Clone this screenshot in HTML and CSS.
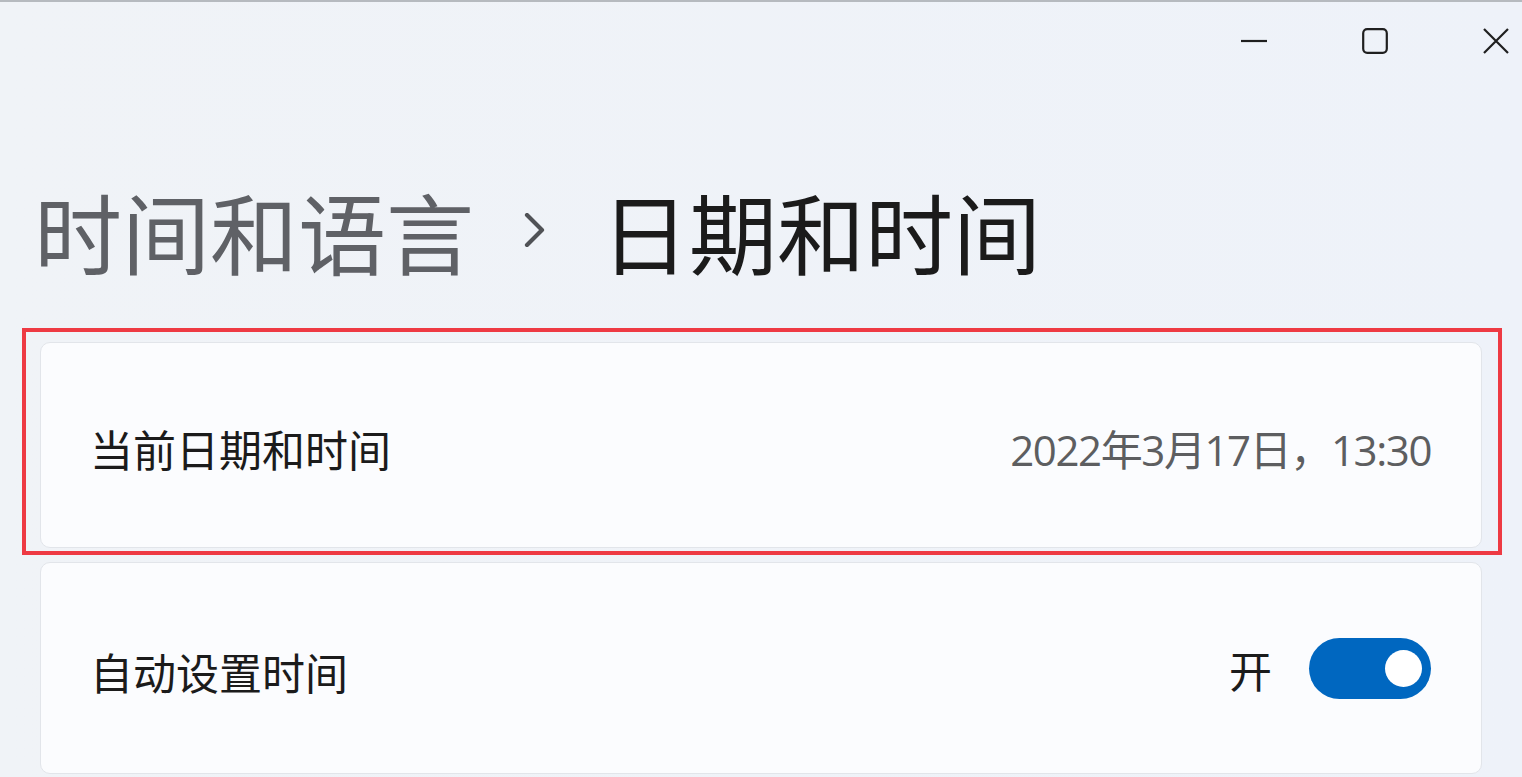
FILE: index.html
```html
<!DOCTYPE html>
<html lang="zh-CN">
<head>
  <meta charset="UTF-8" />
  <meta name="viewport" content="width=device-width, initial-scale=1.0"/>
  <title>日期和时间</title>
  <link rel="stylesheet" href="styles.css">
</head>
<body>
  <div class="window">
    <!-- Title bar controls -->
    <div class="titlebar">
      <button class="caption-btn" aria-label="最小化">
        <svg width="26" height="26" viewBox="0 0 26 26"><path d="M0 13H26" stroke="#1f1f1f" stroke-width="2.2" fill="none"/></svg>
      </button>
      <button class="caption-btn" aria-label="最大化">
        <svg width="26" height="26" viewBox="0 0 26 26"><rect x="1.2" y="1.2" width="23.6" height="23.6" rx="4" stroke="#1f1f1f" stroke-width="2.2" fill="none"/></svg>
      </button>
      <button class="caption-btn" aria-label="关闭">
        <svg width="26" height="26" viewBox="0 0 26 26"><path d="M1 1L25 25M25 1L1 25" stroke="#1f1f1f" stroke-width="2.2" fill="none"/></svg>
      </button>
    </div>

    <!-- Breadcrumb heading -->
    <h1 class="breadcrumb">
      <span class="crumb-parent">时间和语言</span>
      <svg class="crumb-sep" width="24" height="34" viewBox="0 0 24 34"><path d="M4 2L19 17L4 32" stroke="#505256" stroke-width="4.2" fill="none" stroke-linecap="round" stroke-linejoin="round"/></svg>
      <span class="crumb-current">日期和时间</span>
    </h1>

    <!-- Settings cards -->
    <div class="cards">
      <div class="card card-current">
        <span class="card-label">当前日期和时间</span>
        <span class="card-value">2022年3月17日，13:30</span>
        <div class="mark"></div>
      </div>

      <div class="card card-auto">
        <span class="card-label">自动设置时间</span>
        <div class="toggle-group">
          <span class="toggle-text">开</span>
          <div class="toggle on"><div class="knob"></div></div>
        </div>
      </div>
    </div>
  </div>
</body>
</html>
```

FILE: styles.css
```css
body {
  margin: 0;
  font-family: "Noto Sans CJK SC", sans-serif;
  background: linear-gradient(90deg, #f0f3f7 0%, #eef2f9 100%);
  color: #1b1b1b;
  overflow: hidden;
}

.window {
  height: 775px;
  border-top: 2px solid #b6babf;
}

.titlebar {
  display: flex;
  justify-content: flex-end;
  gap: 95px;
  padding: 26px 13px 0 0;
}

.caption-btn {
  width: 26px;
  height: 26px;
  padding: 0;
  border: none;
  background: none;
  display: flex;
}

.breadcrumb {
  display: flex;
  align-items: center;
  margin: 124px 0 0 34px;
  font-size: 88px;
  font-weight: 400;
  line-height: 103px;
}

.crumb-parent {
  color: #5f6166;
}

.crumb-sep {
  margin: 0 54px 0 49px;
}

.crumb-current {
  color: #1b1b1b;
}

.cards {
  display: flex;
  flex-direction: column;
  gap: 14px;
  margin: 61px 40px 0;
}

.card {
  position: relative;
  display: flex;
  align-items: center;
  justify-content: space-between;
  padding: 0 50px 0 49px;
  background: #fbfcfe;
  border: 1px solid #e2e5ea;
  border-radius: 10px;
  font-size: 43px;
}

.card-current {
  height: 204px;
}

.card-auto {
  height: 210px;
}

.card-label {
  margin-top: 5px;
  color: #1b1b1b;
}

.card-value {
  margin-top: 5px;
  font-family: "Open Sans", "Noto Sans CJK SC", sans-serif;
  font-size: 42px;
  letter-spacing: -1.4px;
  color: #5d5e60;
}

.toggle-group {
  display: flex;
  align-items: center;
  gap: 37px;
}

.toggle-text {
  margin-top: 2px;
  color: #1b1b1b;
}

.toggle {
  width: 122px;
  height: 61px;
  border-radius: 31px;
  background: #0067c0;
  display: flex;
  align-items: center;
  justify-content: flex-end;
}

.knob {
  width: 37px;
  height: 37px;
  margin-right: 9px;
  border-radius: 50%;
  background: #fff;
}

/* annotation box around the first card */
.mark {
  position: absolute;
  top: -15px;
  left: -19px;
  right: -21px;
  bottom: -8px;
  border: 4px solid #ee3a43;
  pointer-events: none;
}
```
